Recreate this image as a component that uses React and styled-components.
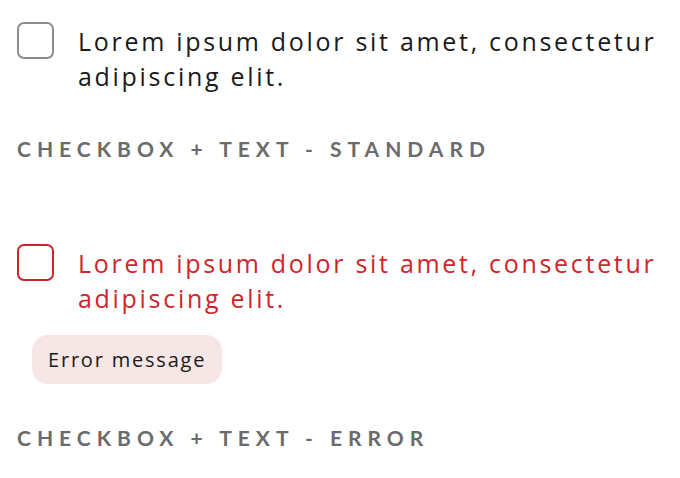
import React from 'react';
import styled, { createGlobalStyle } from 'styled-components';

const GlobalStyle = createGlobalStyle`
  body {
    margin: 0;
    background: #fff;
  }
`;

const Page = styled.div`
  display: flex;
  flex-direction: column;
  padding: 22px 0 0 17px;
  font-family: 'Open Sans', sans-serif;
`;

const Section = styled.div`
  display: flex;
  flex-direction: column;
  margin-bottom: ${(p) => p.$gap || 0}px;
`;

const Row = styled.label`
  display: flex;
  align-items: flex-start;
  gap: 24px;
`;

const Box = styled.span`
  flex: none;
  width: 37px;
  height: 37px;
  box-sizing: border-box;
  border: 2px solid ${(p) => (p.$error ? '#d0242b' : '#8c8c8c')};
  border-radius: 7px;
  background: #fff;
`;

const Text = styled.span`
  font-size: 25px;
  line-height: 35px;
  letter-spacing: 2.7px;
  color: ${(p) => (p.$error ? '#d0242b' : '#1a1a1a')};
  margin-top: 2px;
`;

const ErrorPill = styled.div`
  align-self: flex-start;
  margin: 19px 0 0 15px;
  padding: 0 16px;
  height: 49px;
  display: flex;
  align-items: center;
  background: #f7e6e6;
  border-radius: 16px;
  font-size: 20px;
  letter-spacing: 1.8px;
  color: #1a1a1a;
`;

const Caption = styled.div`
  margin-top: ${(p) => p.$top}px;
  font-family: 'Lato', sans-serif;
  font-weight: 700;
  font-size: 21px;
  letter-spacing: 6px;
  color: #6b6b6b;
`;

export default function App() {
  return (
    <>
      <GlobalStyle />
      <Page>
        <Section $gap={83}>
          <Row>
            <Box />
            <Text>Lorem ipsum dolor sit amet, consectetur adipiscing elit.</Text>
          </Row>
          <Caption $top={42}>CHECKBOX + TEXT - STANDARD</Caption>
        </Section>
        <Section>
          <Row>
            <Box $error />
            <Text $error>Lorem ipsum dolor sit amet, consectetur adipiscing elit.</Text>
          </Row>
          <ErrorPill>Error message</ErrorPill>
          <Caption $top={41}>CHECKBOX + TEXT - ERROR</Caption>
        </Section>
      </Page>
    </>
  );
}
